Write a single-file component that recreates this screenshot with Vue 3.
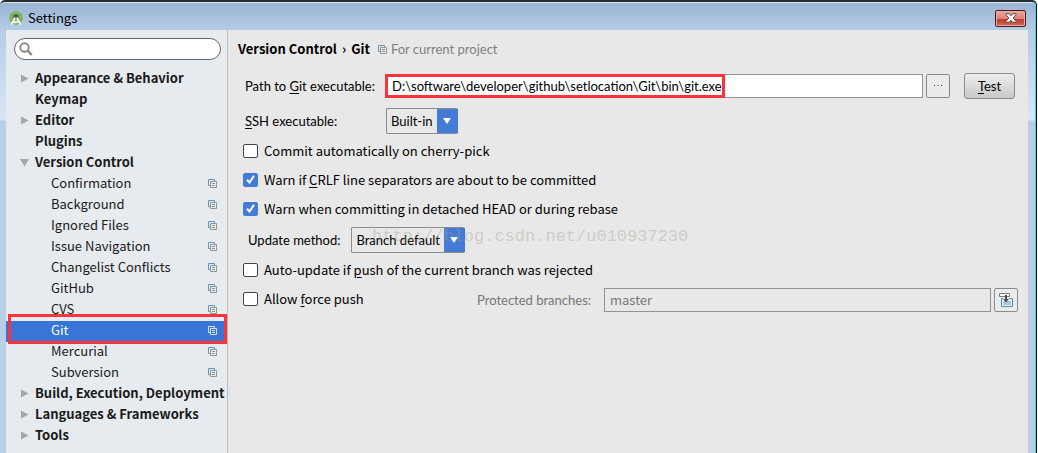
<script setup>
import { ref } from 'vue'

const tree = ref([
  { label: 'Appearance & Behavior', arrow: 'closed' },
  { label: 'Keymap' },
  { label: 'Editor', arrow: 'closed' },
  { label: 'Plugins' },
  {
    label: 'Version Control',
    arrow: 'open',
    children: [
      'Confirmation',
      'Background',
      'Ignored Files',
      'Issue Navigation',
      'Changelist Conflicts',
      'GitHub',
      'CVS',
      'Git',
      'Mercurial',
      'Subversion',
    ],
  },
  { label: 'Build, Execution, Deployment', arrow: 'closed' },
  { label: 'Languages & Frameworks', arrow: 'closed' },
  { label: 'Tools', arrow: 'closed' },
])

const selected = ref('Git')
const search = ref('')
const gitPath = ref('D:\\software\\developer\\github\\setlocation\\Git\\bin\\git.exe')
const ssh = ref('Built-in')
const method = ref('Branch default')
const branches = ref('master')
const cherryPick = ref(false)
const warnCrlf = ref(true)
const warnDetached = ref(true)
const autoUpdate = ref(false)
const forcePush = ref(false)
</script>

<template>
  <div class="window">
    <header class="titlebar">
      <svg class="app-icon" width="14" height="15" viewBox="0 0 14 15" aria-hidden="true">
        <circle cx="7" cy="7" r="6.8" fill="#7cb850" />
        <path d="M3.800 6.200a3.200 3.200 0 0 1 6.400 0v1H3.800z" fill="#66776c" />
        <path d="M6.200 6.500 2.200 13.800M7.800 6.500l4 7.300M3.800 10.800c2.200.8 4.600.4 6.400-1" fill="none" stroke="#f2f4f5" stroke-width="1.800" />
        <circle cx="7" cy="5.200" r="1.500" fill="#44524c" />
      </svg>
      <span class="title">Settings</span>
      <button class="close" type="button" aria-label="Close">
        <svg width="12" height="10" viewBox="0 0 12 10" aria-hidden="true">
          <path d="M1 .7h3.200L6 2.800 7.800.7H11v1L8.200 5 11 8.300v1H7.800L6 7.200 4.200 9.300H1v-1L3.800 5 1 1.700z" fill="#fff" stroke="#57484d" stroke-width="1" />
        </svg>
      </button>
    </header>

    <div class="body">
      <aside class="sidebar">
        <label class="search">
          <svg width="14" height="14" viewBox="0 0 14 14" aria-hidden="true">
            <circle cx="5.500" cy="5.500" r="4.200" fill="none" stroke="#8d8d8d" stroke-width="2" />
            <path d="m8.600 8.600 4.200 4.200" stroke="#8d8d8d" stroke-width="2.400" />
          </svg>
          <input v-model="search" type="text" aria-label="Search settings" />
        </label>

        <ul class="tree">
          <li v-for="node in tree" :key="node.label">
            <button class="node" type="button">
              <svg class="arrow" width="9" height="9" viewBox="0 0 9 9" aria-hidden="true">
                <path v-if="node.arrow === 'closed'" d="M1 .5v8l7.500-4z" fill="#a6a6a6" />
                <path v-if="node.arrow === 'open'" d="M0 1h9L4.500 8.500z" fill="#a6a6a6" />
              </svg>
              {{ node.label }}
            </button>
            <ul v-if="node.children">
              <li v-for="child in node.children" :key="child" class="child">
                <button
                  class="leaf"
                  :class="{ selected: child === selected }"
                  type="button"
                  @click="selected = child"
                >
                  {{ child }}
                  <svg width="9" height="9" viewBox="0 0 9 9" aria-hidden="true">
                    <path class="sheet-back" d="M2 6.500H.5v-6h6V2" fill="none" />
                    <path class="sheet-front" d="M2.500 2.500h6v6h-6zM4 4.500h3M4 6.500h3" fill="none" />
                  </svg>
                </button>
                <span v-if="child === selected" class="mark"></span>
              </li>
            </ul>
          </li>
        </ul>
      </aside>

      <main class="content">
        <h1 class="heading">
          Version Control <span class="chevron">›</span> Git
          <span class="scope">
            <svg width="9" height="9" viewBox="0 0 9 9" aria-hidden="true">
              <path class="sheet-back" d="M2 6.500H.5v-6h6V2" fill="none" />
              <path class="sheet-front" d="M2.500 2.500h6v6h-6zM4 4.500h3M4 6.500h3" fill="none" />
            </svg>
            For current project
          </span>
        </h1>

        <div class="row">
          <label class="name" for="path">Path to <u>G</u>it executable:</label>
          <div class="path">
            <input id="path" v-model="gitPath" class="field" type="text" />
            <span class="path-mark"></span>
          </div>
          <button class="small" type="button" aria-label="Browse">
            <svg width="8" height="2" viewBox="0 0 8 2" aria-hidden="true">
              <path d="M0 .5h1M3.500.5h1M7 .5h1" stroke="#333" />
            </svg>
          </button>
          <button class="test" type="button"><u>T</u>est</button>
        </div>

        <div class="row ssh">
          <label class="name" for="ssh"><u>S</u>SH executable:</label>
          <span class="combo">
            <select id="ssh" v-model="ssh">
              <option>Built-in</option>
              <option>Native</option>
            </select>
            <svg width="8" height="6" viewBox="0 0 8 6" aria-hidden="true"><path d="M0 0h8L4 6z" fill="#fff" /></svg>
          </span>
        </div>

        <div class="checks">
          <label class="check">
            <span class="box"><input v-model="cherryPick" type="checkbox" /></span>
            <span>Commit automatically on cherry-pick</span>
          </label>
          <label class="check">
            <span class="box">
              <input v-model="warnCrlf" type="checkbox" />
              <svg v-if="warnCrlf" width="9" height="9" viewBox="0 0 9 9" aria-hidden="true"><path d="m1 4.800 2.500 2.700L8 .8" fill="none" stroke="#fff" stroke-width="2" /></svg>
            </span>
            <span>Warn if <u>C</u>RLF line separators are about to be committed</span>
          </label>
          <label class="check">
            <span class="box">
              <input v-model="warnDetached" type="checkbox" />
              <svg v-if="warnDetached" width="9" height="9" viewBox="0 0 9 9" aria-hidden="true"><path d="m1 4.800 2.500 2.700L8 .8" fill="none" stroke="#fff" stroke-width="2" /></svg>
            </span>
            <span>Warn when committing in detached HEAD or during rebase</span>
          </label>
        </div>

        <div class="row update">
          <label for="method">Update method:</label>
          <span class="combo">
            <select id="method" v-model="method">
              <option>Branch default</option>
              <option>Merge</option>
              <option>Rebase</option>
            </select>
            <svg width="8" height="6" viewBox="0 0 8 6" aria-hidden="true"><path d="M0 0h8L4 6z" fill="#fff" /></svg>
          </span>
        </div>

        <div class="checks">
          <label class="check">
            <span class="box"><input v-model="autoUpdate" type="checkbox" /></span>
            <span>Auto-update if <u>p</u>ush of the current branch was rejected</span>
          </label>
          <div class="force">
            <label class="check">
              <span class="box"><input v-model="forcePush" type="checkbox" /></span>
              <span>Allow <u>f</u>orce push</span>
            </label>
            <label class="protected" for="branches">Protected branches:</label>
            <input id="branches" v-model="branches" class="field" type="text" disabled />
            <button class="small" type="button" aria-label="Edit branches">
              <svg width="14" height="14" viewBox="0 0 14 14" aria-hidden="true">
                <path d="M4 5.500H2.500v8h11v-8H10" fill="#e8f1f6" stroke="#4593bd" />
                <path d="M4 8h8v4H4z" fill="#a9c9da" />
                <path d="M.5.5h10v3H.5z" fill="#fff" stroke="#7d7d7d" />
                <path d="M6 2h2v4h2L7 9.500 4 6h2z" fill="#4d4d4d" />
              </svg>
            </button>
          </div>
        </div>
      </main>
    </div>
    <div class="watermark">http://blog.csdn.net/u010937230</div>
  </div>
</template>

<style>
body {
  background: #fff;
}
</style>

<style scoped>
* {
  box-sizing: border-box;
}
.window {
  position: relative;
  display: flex;
  flex-direction: column;
  min-height: 100vh;
  margin-right: 1px;
  padding: 0 8px 0 6px;
  border-top: 2px solid #2b2b33;
  border-right: 1px solid #0a0a0a;
  border-radius: 5px 5px 0 0;
  box-shadow: inset -1px 0 #35d3ec, inset 0 1px #d7e5f3;
  background: linear-gradient(#98b3d2 0, #b6cce6 28px, #d9e6f5 118px, #b9cfe8 119px, #b9cfe8 100%);
  color: #000;
  font: 13px/18px "Noto Sans CJK SC", "Noto Sans", sans-serif;
}
input,
select,
button {
  margin: 0;
  font: inherit;
  color: inherit;
}
.titlebar {
  display: flex;
  align-items: center;
  height: 28px;
  padding: 4px 2px 0 3px;
}
.title {
  flex: 1;
  margin-left: 5px;
}
.close {
  display: flex;
  align-items: center;
  justify-content: center;
  width: 31px;
  height: 17px;
  padding: 0;
  border: 1px solid #4b1823;
  border-radius: 2px;
  box-shadow: inset 0 0 0 1px #e9aaa2;
  background: linear-gradient(#eba69c 0, #dd8478 50%, #b93a27 51%, #cd6753 100%);
}
.body {
  display: flex;
  flex: 1;
}
.sidebar {
  flex: 0 0 222px;
  min-width: 0;
  border-right: 1px solid #b9bcbe;
  background: #e6ebef;
}
.search {
  display: flex;
  align-items: center;
  gap: 4px;
  height: 22px;
  margin: 8px 6px 9px 8px;
  padding: 0 8px 0 4px;
  border: 1px solid #666;
  border-radius: 11px;
  background: #fff;
}
.search input {
  flex: 1;
  min-width: 0;
  padding: 0;
  border: 0;
  outline: 0;
  background: none;
}
ul {
  margin: 0;
  padding: 0;
  list-style: none;
}
.node,
.leaf {
  display: flex;
  align-items: center;
  width: 100%;
  height: 21px;
  border: 0;
  background: none;
  text-align: left;
  white-space: nowrap;
  color: #1a1a1a;
}
.node {
  gap: 6px;
  padding: 0 0 3px 14px;
  font-weight: 700;
}
.leaf {
  justify-content: space-between;
  padding: 0 10px 3px 45px;
}
.leaf.selected {
  background: #3875d6;
  color: #fff;
}
.child {
  position: relative;
}
.mark {
  position: absolute;
  inset: -7px 0 -2px 2px;
  border: 3px solid #fc3439;
  pointer-events: none;
  z-index: 1;
}
.sheet-back {
  stroke: #5b9aba;
}
.sheet-front {
  stroke: #949494;
}
.selected .sheet-back,
.selected .sheet-front {
  stroke: #d5e0f0;
}
.content {
  flex: 1;
  min-width: 0;
  padding: 0 10px 16px;
  background: #e8e8e8;
}
.heading {
  display: flex;
  align-items: center;
  gap: 5px;
  height: 38px;
  margin: 0 0 5px;
  font-size: 13px;
  font-weight: 700;
}
.scope {
  display: flex;
  align-items: center;
  gap: 4px;
  margin-left: 3px;
  font-family: Lato, "Noto Sans", sans-serif;
  font-weight: 400;
  color: #808080;
}
.row {
  display: flex;
  align-items: center;
  height: 26px;
  padding: 0 3px 0 7px;
  font-family: Lato, "Noto Sans", sans-serif;
}
.name {
  flex: 0 0 141px;
}
u {
  text-underline-offset: 2px;
}
.path {
  position: relative;
  flex: 1;
  display: flex;
  margin-right: 3px;
}
.field {
  flex: 1;
  min-width: 0;
  height: 24px;
  padding: 0 5px 1px;
  border: 1px solid #949494;
  background: #fff;
}
.field:disabled {
  background: #e8e8e8;
  color: #777;
}
.path-mark {
  position: absolute;
  top: 0;
  left: -1px;
  width: 340px;
  height: 24px;
  border: 3px solid #fc3439;
  pointer-events: none;
}
.small {
  display: flex;
  align-items: center;
  justify-content: center;
  flex: 0 0 24px;
  height: 24px;
  padding: 0;
  border: 1px solid #8c8c8c;
  border-radius: 2px;
  background: #ebebeb;
}
.test {
  width: 51px;
  height: 26px;
  margin-left: 14px;
  padding: 0;
  border: 1px solid #8c8c8c;
  border-radius: 3px;
  background: linear-gradient(#eee, #c8c8c8);
}
.ssh {
  margin: 9px 0 3px;
}
.combo {
  display: inline-grid;
  align-items: center;
  height: 26px;
}
.combo > * {
  grid-area: 1 / 1;
}
.combo svg {
  justify-self: end;
  margin-right: 7px;
  pointer-events: none;
}
.combo select {
  appearance: none;
  height: 26px;
  padding: 0 24px 0 4px;
  border: 1px solid #8c8c8c;
  border-right-color: #447bd6;
  border-radius: 2px;
  outline: 0;
  background: linear-gradient(#447bd6, #447bd6) right / 21px 100% no-repeat border-box #e8e8e8;
}
.check {
  display: flex;
  align-items: center;
  gap: 6px;
  height: 29px;
  padding: 0 0 2px 5px;
}
.box {
  display: grid;
  place-items: center;
}
.box > * {
  grid-area: 1 / 1;
}
.box svg {
  pointer-events: none;
}
.box input {
  appearance: none;
  width: 15px;
  height: 14px;
  border: 1px solid #444;
  border-radius: 2px;
  background: #fff;
}
.box input:checked {
  border-color: #447bd6;
  background: #447bd6;
}
.update {
  gap: 11px;
  margin: 3px 0;
  padding-left: 10px;
}
.force {
  display: flex;
  align-items: center;
}
.force .check {
  flex: 0 0 239px;
}
.protected {
  flex: 0 0 127px;
  font-family: Lato, "Noto Sans", sans-serif;
  color: #777;
}
.force .small {
  margin-left: 3px;
}
.watermark {
  position: absolute;
  top: 225px;
  left: 372px;
  font: 17px/20px "Liberation Mono", monospace;
  color: rgba(160, 160, 145, 0.4);
  pointer-events: none;
}
</style>
